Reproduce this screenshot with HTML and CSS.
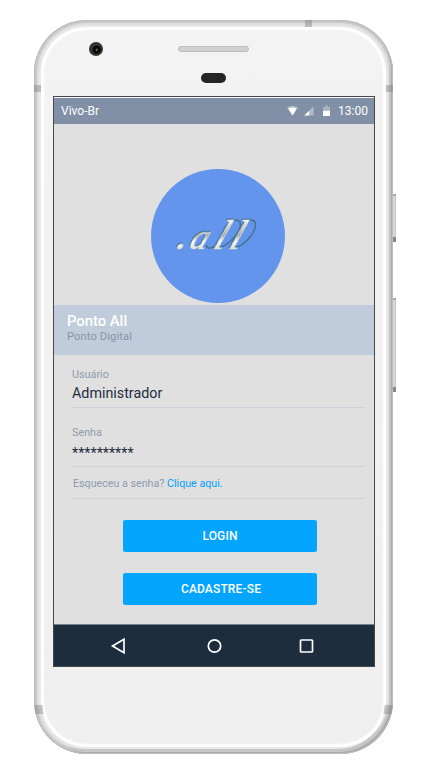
FILE: index.html
```html
<!DOCTYPE html>
<html lang="pt-BR">
<head>
<meta charset="utf-8">
<title>Ponto All</title>
<link rel="stylesheet" href="styles.css">
</head>
<body>
<div class="phone">
  <i class="key power"></i><i class="key volume"></i>
  <div class="shell">
    <i class="antenna top"></i><i class="antenna upper-left"></i><i class="antenna upper-right"></i>
    <i class="antenna lower-left"></i><i class="antenna lower-right"></i>
    <i class="camera"></i><i class="speaker"></i><i class="sensor"></i>
    <main class="screen">
      <header class="status">
        <span class="carrier">Vivo-Br</span>
        <svg class="signals" width="46" height="12" viewBox="0 0 46 12">
          <path d="M0 2.6Q5.5-1 11 2.6L5.5 10.5Z" fill="#fff" opacity=".4"/>
          <path d="M1.3 3.4Q5.5 1.8 9.7 3.4L5.5 10.5Z" fill="#fff"/>
          <path d="M17.3 10.5L26.5 1.4V10.5Z" fill="#fff" opacity=".4"/>
          <path d="M17.3 10.5L22 5.8V10.5Z" fill="#fff"/>
          <path d="M36 2h2V.6h3V2h2v9h-7Z" fill="#fff" opacity=".3"/>
          <path d="M36 5.7h7V11h-7Z" fill="#fff"/>
        </svg>
        <time>13:00</time>
      </header>
      <section class="hero">
        <svg class="logo" width="134" height="134" viewBox="0 0 134 134">
          <defs>
            <linearGradient id="metal" x1="0" y1="0" x2="0" y2="1">
              <stop offset=".2" stop-color="#f4f4f4"/><stop offset=".52" stop-color="#a7aaad"/>
              <stop offset=".65" stop-color="#fff"/><stop offset=".85" stop-color="#d5d8db"/>
            </linearGradient>
          </defs>
          <circle cx="67" cy="67" r="67" fill="#6495ed"/>
          <g class="flourish">
            <path d="M55 76C57 83 66 77 71 69"/>
            <path d="M67 79C78 77 92 61 89 53C86 48 78 53 73 61"/>
            <path d="M83 79C94 77 107 61 104 53C101 48 93 53 88 61"/>
          </g>
          <g transform="translate(0 80) skewX(-21)" class="wordmark">
            <text><tspan x="24">.</tspan><tspan x="37" class="small">a</tspan><tspan x="61">l</tspan><tspan x="76.5">l</tspan></text>
          </g>
        </svg>
      </section>
      <section class="banner">
        <h1>Ponto All</h1>
        <p>Ponto Digital</p>
      </section>
      <section class="form">
        <div class="field user"><span>Usuário</span><b>Administrador</b></div>
        <div class="field password"><span>Senha</span><b>**********</b></div>
        <p class="forgot">Esqueceu a senha? <a>Clique aqui.</a></p>
        <button class="login">LOGIN</button>
        <button class="signup">CADASTRE-SE</button>
      </section>
      <nav class="nav">
        <svg width="320" height="41" viewBox="0 0 320 41" fill="none" stroke="#fff" stroke-width="1.7">
          <path d="M58.5 21L70 14.2V27.8Z"/>
          <circle cx="160.5" cy="21" r="6.2"/>
          <rect x="246.5" y="15" width="12" height="12" rx=".7"/>
        </svg>
      </nav>
    </main>
  </div>
</div>
</body>
</html>
```

FILE: styles.css
```css
* { box-sizing: border-box; }
body { margin: 0; background: #fff; font-family: Roboto, sans-serif; }
i { display: block; }
.phone { position: relative; width: 359px; height: 734px; margin: 20px 0 0 34px; }
.shell {
  position: relative; width: 359px; height: 734px; padding: 76px 18px 0 19px;
  border-radius: 53px; overflow: hidden;
  background: linear-gradient(#f3f3f3, #efefef);
  box-shadow: inset 0 0 0 1px #bcbcbc, inset -2px -2px 0 #aaa, inset 0 0 0 3px #c9c9c9,
    inset -3px -4px 0 1px #c6c6c6, inset 0 0 0 5px #dedede, inset 0 0 0 7px #e9e9e9, inset 0 0 2px 10px #fff;
}
.key { position: absolute; left: 358px; width: 4px; background: linear-gradient(90deg, #999, #ddd 35%, #c5c5c5); border-top: 2px solid #aaa; border-bottom: 5px solid #888; }
.power { top: 174px; height: 48px; }
.volume { top: 278px; height: 94px; }
.antenna { position: absolute; background: rgba(120,120,120,.4); }
.antenna.top { left: 271px; top: 0; width: 7px; height: 7px; }
.upper-left, .upper-right { top: 65px; width: 7px; height: 7px; }
.upper-left { left: 0; }
.upper-right { right: 0; }
.lower-left, .lower-right { top: 685px; width: 8px; height: 9px; }
.lower-left { left: 1px; transform: skewX(8deg); }
.lower-right { right: 1px; transform: skewX(-8deg); }
.camera { position: absolute; left: 55px; top: 22px; width: 14px; height: 14px; border-radius: 50%; background: radial-gradient(circle at 55% 55%, #625d35 0 8%, #080808 14% 34%, #363636 42%, #292929 90%); }
.speaker { position: absolute; left: 144px; top: 26px; width: 71px; height: 6px; border-radius: 3px; background: #d0d0d0; border: 1px solid #bcbcbc; }
.sensor { position: absolute; left: 167px; top: 53px; width: 25px; height: 10px; border-radius: 5px; background: #252525; }
.screen { display: flex; flex-direction: column; width: 322px; height: 571px; border: 1px solid #484848; background: #e0e0e0; }
.screen > * { flex: none; }
.status { display: flex; align-items: center; height: 27px; padding: 0 6px 1px 7px; border-top: 1px solid #f7f7f7; background: #8190a6; color: #fff; font-size: 12px; line-height: 14px; }
.carrier { flex: 1; }
.signals { margin-right: 5px; }
.status time { width: 30px; white-space: nowrap; }
.hero { display: flex; justify-content: center; height: 181px; padding: 45px 0 0 8px; }
.logo { display: block; }
.wordmark { font: italic 42px "Liberation Serif", serif; fill: url(#metal); stroke: #e8eaec; stroke-width: .6px; filter: drop-shadow(.6px .6px 0 #48718c) drop-shadow(-.5px -.4px 0 #48718c); }
.wordmark .small { font-size: 35px; }
.flourish { fill: none; stroke: #48718c; stroke-width: 1.5px; }
.banner { height: 50px; padding: 8px 13px; background: #c0ccdb; }
h1 { margin: 0; color: #fff; font-size: 14.8px; font-weight: 500; line-height: 17px; }
.banner p { margin: 0; color: #8795a9; font-size: 11.2px; letter-spacing: .1px; line-height: 13px; }
.form { height: 269px; padding: 0 9px 0 18px; color: #8d9bae; }
.field { display: flex; flex-direction: column; border-bottom: 1px solid #cdd3dc; }
.field span { font-size: 10.8px; line-height: 13px; }
.field b { color: #1e2d3c; font-size: 14.3px; font-weight: 400; line-height: 18px; }
.user { height: 53px; padding-top: 13px; }
.user b { margin-top: 3px; }
.password { height: 59px; padding-top: 18px; }
.password b { margin-top: 5px; }
.forgot { height: 32px; margin: 0; padding: 10px 0 0 1px; border-bottom: 1px solid #cdd3dc; font-size: 10.7px; line-height: 14px; }
.forgot a { color: #039eff; }
button { display: block; width: 194px; height: 32px; padding: 0; border: 0; border-radius: 2px; background: #03a5ff; color: #fff; font: 500 12px Roboto, sans-serif; letter-spacing: .15px; }
.login { margin: 21px 0 0 51px; }
.signup { margin: 21px 0 0 51px; padding-left: 2px; }
.nav { height: 42px; background: #1e2d3d; border-top: 1px solid #71858b; }
.nav svg { display: block; }
```
